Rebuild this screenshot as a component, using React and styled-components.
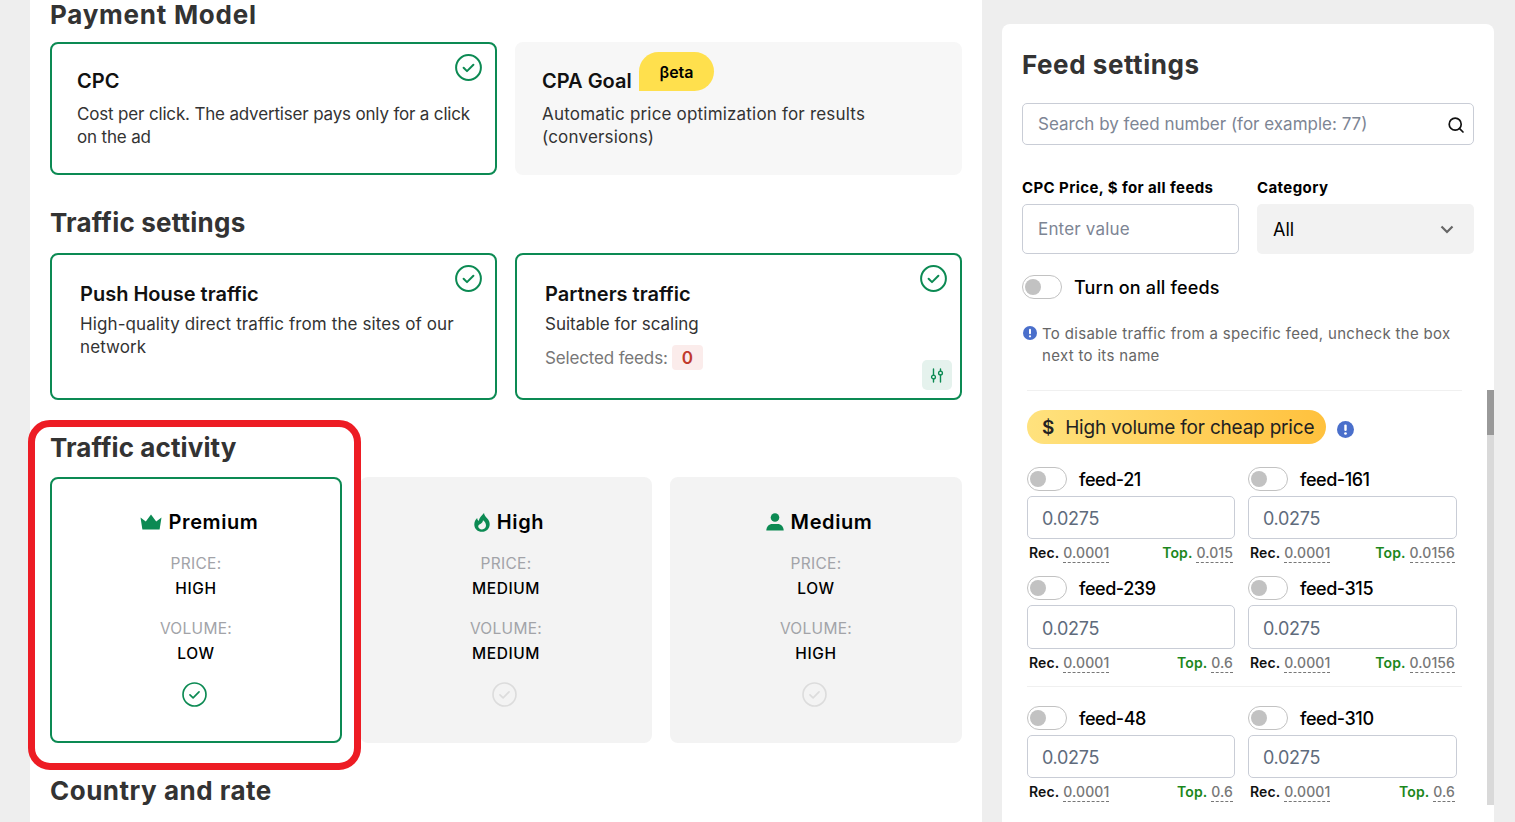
import React from "react";
import styled, { createGlobalStyle } from "styled-components";

const GREEN = "#0c8a53";

const GlobalStyle = createGlobalStyle`
  html, body {
    margin: 0;
    height: 100%;
    overflow: hidden;
    background: #eeeeee;
    font-family: Inter, "Liberation Sans", sans-serif;
    color: #000;
  }
  * { box-sizing: border-box; }
`;

const Page = styled.div`
  display: flex;
  align-items: flex-start;
  gap: 20px;
  height: 822px;
  padding-left: 30px;
  overflow: hidden;
`;

const MainPanel = styled.main`
  width: 952px;
  height: 822px;
  padding: 1px 20px 0;
  background: #fff;
`;

const Section = styled.section`
  position: relative;
  margin-bottom: 34px;
`;

const Heading = styled.h2`
  margin: 0 0 ${(p) => p.$after}px;
  font-size: 26px;
  line-height: 28px;
  font-weight: 700;
  letter-spacing: ${(p) => p.$track}px;
  color: #333;
`;

const Grid = styled.div`
  display: grid;
  grid-template-columns: repeat(${(p) => p.$cols}, 1fr);
  gap: 18px;
`;

const OptionCard = styled.div`
  position: relative;
  height: ${(p) => p.$height}px;
  padding: ${(p) => p.$pad};
  border-radius: 8px;
  border: 2px solid ${(p) => (p.$active ? GREEN : "#f7f7f7")};
  background: ${(p) => (p.$active ? "#fff" : "#f7f7f7")};
`;

const CardTitle = styled.div`
  display: flex;
  align-items: center;
  height: 26px;
  font-size: 20px;
  font-weight: 600;
  color: #111;
`;

const CardText = styled.p`
  margin: ${(p) => p.$top || 0}px 0 0;
  font-size: 17px;
  line-height: 23px;
  letter-spacing: ${(p) => p.$track ?? 0.1}px;
  color: #333;
`;

const CheckSlot = styled.span`
  position: absolute;
  top: 10px;
  right: 13px;
  display: flex;
`;

const BetaBadge = styled.span`
  position: absolute;
  top: 8px;
  left: 122px;
  display: flex;
  align-items: center;
  justify-content: center;
  width: 75px;
  height: 39px;
  border-radius: 20px 20px 20px 0;
  background: #ffe04d;
  font-size: 16px;
  font-weight: 600;
`;

const SelectedRow = styled.div`
  display: flex;
  align-items: center;
  gap: 4px;
  margin-top: 9px;
  font-size: 17px;
  letter-spacing: -0.15px;
  color: #777;
`;

const CountBadge = styled.span`
  display: flex;
  align-items: center;
  justify-content: center;
  width: 31px;
  height: 25px;
  border-radius: 4px;
  background: #fbeceb;
  color: #c0392b;
  font-weight: 600;
`;

const SliderButton = styled.span`
  position: absolute;
  right: 8px;
  bottom: 8px;
  display: flex;
  align-items: center;
  justify-content: center;
  width: 30px;
  height: 30px;
  border-radius: 5px;
  background: #e5f2ed;
`;

const ActivityCard = styled.div`
  display: flex;
  flex-direction: column;
  align-items: center;
  height: 266px;
  padding-top: 30px;
  border-radius: 8px;
  border: 2px solid ${(p) => (p.$active ? GREEN : "#f3f3f3")};
  background: ${(p) => (p.$active ? "#fff" : "#f3f3f3")};
`;

const ActivityTitle = styled.div`
  display: flex;
  align-items: center;
  gap: 7px;
  height: 26px;
  margin: 0 0 16px 6px;
  font-size: 20px;
  font-weight: 600;
  letter-spacing: 0.6px;
`;

const ActivityLabel = styled.div`
  font-size: 15.5px;
  line-height: 25px;
  letter-spacing: 0.3px;
  color: #a2a3a8;
`;

const ActivityValue = styled.div`
  margin-bottom: 15px;
  font-size: 15.5px;
  line-height: 25px;
  font-weight: 500;
  letter-spacing: 0.6px;
`;

const ActivityCheck = styled.span`
  display: flex;
  margin: 1px 3px 0 0;
`;

const Highlight = styled.div`
  position: absolute;
  top: -14px;
  left: -22px;
  width: 333px;
  height: 350px;
  border: 7px solid #ed1c24;
  border-radius: 22px;
  pointer-events: none;
`;

const SidePanel = styled.aside`
  position: relative;
  width: 492px;
  height: 798px;
  margin-top: 24px;
  padding: 25px 20px 0;
  border-radius: 8px 8px 0 0;
  background: #fff;
`;

const SideTitle = styled.h2`
  margin: 0 0 22px;
  height: 32px;
  font-size: 26px;
  line-height: 32px;
  font-weight: 700;
  letter-spacing: 0.55px;
  color: #333;
`;

const FieldBox = styled.div`
  position: relative;
  display: flex;
  align-items: center;
  height: ${(p) => p.$height}px;
  padding: ${(p) => (p.$value ? "2px 0 0 14px" : "0 0 0 15px")};
  border: 1px solid #c9cdd6;
  border-radius: 5px;
  background: #fff;
  font-size: ${(p) => (p.$value ? 18 : 17)}px;
  letter-spacing: ${(p) => p.$track || 0}px;
  color: ${(p) => (p.$value ? "#5f6b7c" : "#7d8594")};
`;

const SearchIcon = styled.span`
  position: absolute;
  right: 7px;
  top: 11px;
  display: flex;
`;

const FilterRow = styled.div`
  display: grid;
  grid-template-columns: 217px 217px;
  gap: 18px;
  margin-top: 33px;
`;

const FieldLabel = styled.div`
  height: 18px;
  margin-bottom: 8px;
  padding-top: 1px;
  font-size: 15px;
  line-height: 18px;
  font-weight: 700;
  letter-spacing: 0.4px;
`;

const SelectBox = styled.div`
  display: flex;
  align-items: center;
  justify-content: space-between;
  height: 50px;
  padding: 0 20px 0 16px;
  border-radius: 5px;
  background: #f2f2f2;
  font-size: 18px;
`;

const ToggleRow = styled.div`
  display: flex;
  align-items: center;
  gap: 12px;
  height: 24px;
  margin-top: ${(p) => p.$top || 0}px;
  font-size: 18px;
  font-weight: 500;
  letter-spacing: ${(p) => p.$track || 0.15}px;
`;

const Toggle = styled.span`
  display: block;
  flex: none;
  width: 40px;
  height: 24px;
  padding: 3px 2px;
  border: 1px solid #c2c2c2;
  border-radius: 12px;
  background: #fff;

  &::before {
    content: "";
    display: block;
    width: 16px;
    height: 16px;
    border-radius: 50%;
    background: #c2c2c2;
  }
`;

const Hint = styled.div`
  display: flex;
  align-items: flex-start;
  gap: 5px;
  margin-top: 24px;
  padding-left: 1px;
  font-size: 15px;
  line-height: 22px;
  letter-spacing: 0.32px;
  color: #666;

  svg {
    flex: none;
    margin-top: 3px;
  }
`;

const Divider = styled.hr`
  height: 1px;
  margin: ${(p) => p.$top}px 12px ${(p) => p.$bottom}px 5px;
  border: 0;
  background: #f0f0f0;
`;

const Tier = styled.div`
  display: flex;
  align-items: center;
  gap: 11px;
  margin-left: 5px;
  margin-bottom: 23px;
`;

const TierPill = styled.div`
  display: flex;
  align-items: center;
  gap: 11px;
  width: 299px;
  height: 34px;
  padding-left: 15px;
  border-radius: 17px;
  background: linear-gradient(90deg, #ffe27e, #ffc13d);
  font-size: 19px;
  letter-spacing: -0.2px;
  color: #222;

  b {
    font-weight: 600;
  }
`;

const TierIcon = styled.span`
  display: flex;
  margin-top: 4px;
`;

const FeedGrid = styled.div`
  display: grid;
  grid-template-columns: 208px 209px;
  column-gap: 13px;
  row-gap: 14px;
  margin-left: 5px;
`;

const Feed = styled.div`
  display: flex;
  flex-direction: column;
  gap: 5px;
`;

const Stats = styled.div`
  display: flex;
  justify-content: space-between;
  padding: 0 2px;
  font-size: 14px;
  line-height: 18px;
  letter-spacing: 0.1px;
`;

const Stat = styled.span`
  font-weight: 600;
  color: ${(p) => (p.$top ? "#1c871c" : "#111")};

  u {
    margin-left: 4px;
    padding-bottom: 1px;
    font-weight: 500;
    text-decoration: none;
    color: #777;
    border-bottom: 1px dashed #777;
  }
`;

const ScrollTrack = styled.div`
  position: absolute;
  top: 366px;
  right: 0;
  width: 7px;
  height: 415px;
  background: #d9d9d9;

  &::before {
    content: "";
    display: block;
    height: 45px;
    background: #999;
  }
`;

const CheckCircle = ({ size = 27, color = GREEN, width = 2 }) => (
  <svg width={size} height={size} viewBox="0 0 27 27" fill="none">
    <circle cx="13.5" cy="13.5" r="12.4" stroke={color} strokeWidth={width} />
    <path d="M8.6 13.8l3.4 3.3 6.4-6.4" stroke={color} strokeWidth={width} strokeLinecap="round" strokeLinejoin="round" />
  </svg>
);

const Crown = () => (
  <svg width="22" height="16" viewBox="0 0 22 16">
    <path fill={GREEN} d="M0.5 3.5L5.8 7.6 11 0.5l5.2 7.1 5.3-4.1-1.9 12H2.4z" />
  </svg>
);

const Flame = () => (
  <svg width="16" height="19" viewBox="0 0 16 19">
    <path
      fill={GREEN}
      fillRule="evenodd"
      d="M10 0c.4 2.700 1.700 3.700 3.300 5.400C14.900 7 15.700 9 15.700 11.200c0 4.300-3.300 7.600-7.700 7.600-4.300 0-7.700-3.200-7.700-7.400 0-2.500 1.200-4.800 2.900-6.300.1 1.300.5 2.200 1.400 2.900C5.400 5 7.500 2.500 10 0zM9 7.300C8.800 9.300 8 10 6.300 11 5 11.800 4.200 12.400 4.200 13.300c0 1.900 1.700 3.100 3.800 3.100 2.300 0 4-1.600 4-3.900 0-2-1.200-4-3-5.200z"
    />
  </svg>
);

const Person = () => (
  <svg width="18" height="18" viewBox="0 0 18 18">
    <circle cx="9" cy="4.500" r="4.300" fill={GREEN} />
    <path fill={GREEN} d="M0.300 17.500c0-4 2.800-6.600 6-6.600h5.400c3.200 0 6 2.600 6 6.600z" />
  </svg>
);

const Sliders = () => (
  <svg width="14" height="15" viewBox="0 0 14 15" fill="none" stroke={GREEN} strokeWidth="1.400" strokeLinecap="round">
    <path d="M3.500 1v6M3.500 11v3M10.500 1v2M10.500 7v7" />
    <circle cx="3.500" cy="9" r="1.900" />
    <circle cx="10.500" cy="5" r="1.900" />
  </svg>
);

const Magnifier = () => (
  <svg width="20" height="20" viewBox="0 0 20 20" fill="none" stroke="#111" strokeWidth="1.700" strokeLinecap="round">
    <circle cx="9.200" cy="9.200" r="6" />
    <path d="M13.600 13.600l3.400 3.400" />
  </svg>
);

const Chevron = () => (
  <svg width="14" height="9" viewBox="0 0 14 9" fill="none" stroke="#666" strokeWidth="2.200">
    <path d="M1.500 1.500L7 7l5.500-5.500" />
  </svg>
);

const InfoDot = ({ size = 14 }) => (
  <svg width={size} height={size} viewBox="0 0 14 14">
    <circle cx="7" cy="7" r="7" fill="#4a6fcb" />
    <rect x="6" y="2.800" width="2" height="5.400" rx="1" fill="#fff" />
    <circle cx="7" cy="10.300" r="1.100" fill="#fff" />
  </svg>
);

const activity = [
  { title: "Premium", icon: <Crown />, price: "HIGH", volume: "LOW", active: true },
  { title: "High", icon: <Flame />, price: "MEDIUM", volume: "MEDIUM" },
  { title: "Medium", icon: <Person />, price: "LOW", volume: "HIGH" },
];

const feedsTop = [
  { name: "feed-21", top: "0.015", height: 43 },
  { name: "feed-161", top: "0.0156", height: 43 },
  { name: "feed-239", top: "0.6", height: 44 },
  { name: "feed-315", top: "0.0156", height: 44 },
];

const feedsBottom = [
  { name: "feed-48", top: "0.6", height: 43 },
  { name: "feed-310", top: "0.6", height: 43 },
];

const FeedItem = ({ name, top, height }) => (
  <Feed>
    <ToggleRow $track={-0.45}>
      <Toggle />
      {name}
    </ToggleRow>
    <FieldBox $height={height} $value $track={-0.3}>0.0275</FieldBox>
    <Stats>
      <Stat>Rec.<u>0.0001</u></Stat>
      <Stat $top>Top.<u>{top}</u></Stat>
    </Stats>
  </Feed>
);

export default function App() {
  return (
    <>
      <GlobalStyle />
      <Page>
        <MainPanel>
          <Section>
            <Heading $after={13} $track={0.75}>Payment Model</Heading>
            <Grid $cols={2}>
              <OptionCard $active $height={133} $pad="24px 20px 0 25px">
                <CheckSlot><CheckCircle /></CheckSlot>
                <CardTitle>CPC</CardTitle>
                <CardText $top={9} $track={-0.17}>Cost per click. The advertiser pays only for a click on the ad</CardText>
              </OptionCard>
              <OptionCard $height={133} $pad="24px 60px 0 25px">
                <CardTitle>CPA Goal</CardTitle>
                <BetaBadge>βeta</BetaBadge>
                <CardText $top={9} $track={0.19}>Automatic price optimization for results (conversions)</CardText>
              </OptionCard>
            </Grid>
          </Section>

          <Section>
            <Heading $after={16} $track={0.22}>Traffic settings</Heading>
            <Grid $cols={2}>
              <OptionCard $active $height={147} $pad="26px 20px 0 28px">
                <CheckSlot><CheckCircle /></CheckSlot>
                <CardTitle>Push House traffic</CardTitle>
                <CardText $top={6}>High-quality direct traffic from the sites of our network</CardText>
              </OptionCard>
              <OptionCard $active $height={147} $pad="26px 20px 0 28px">
                <CheckSlot><CheckCircle /></CheckSlot>
                <CardTitle>Partners traffic</CardTitle>
                <CardText $top={6} $track={0}>Suitable for scaling</CardText>
                <SelectedRow>
                  Selected feeds:
                  <CountBadge>0</CountBadge>
                </SelectedRow>
                <SliderButton><Sliders /></SliderButton>
              </OptionCard>
            </Grid>
          </Section>

          <Section>
            <Highlight />
            <Heading $after={15} $track={0.1}>Traffic activity</Heading>
            <Grid $cols={3}>
              {activity.map((item) => (
                <ActivityCard key={item.title} $active={item.active}>
                  <ActivityTitle>
                    {item.icon}
                    {item.title}
                  </ActivityTitle>
                  <ActivityLabel>PRICE:</ActivityLabel>
                  <ActivityValue>{item.price}</ActivityValue>
                  <ActivityLabel>VOLUME:</ActivityLabel>
                  <ActivityValue>{item.volume}</ActivityValue>
                  <ActivityCheck>
                    {item.active
                      ? <CheckCircle size={25} width={1.800} />
                      : <CheckCircle size={25} color="#dcdcdc" width={1.800} />}
                  </ActivityCheck>
                </ActivityCard>
              ))}
            </Grid>
          </Section>

          <Heading $after={0} $track={0.5}>Country and rate</Heading>
        </MainPanel>

        <SidePanel>
          <SideTitle>Feed settings</SideTitle>
          <FieldBox $height={42}>
            Search by feed number (for example: 77)
            <SearchIcon><Magnifier /></SearchIcon>
          </FieldBox>

          <FilterRow>
            <div>
              <FieldLabel>CPC Price, $ for all feeds</FieldLabel>
              <FieldBox $height={50} $track={0.18}>Enter value</FieldBox>
            </div>
            <div>
              <FieldLabel>Category</FieldLabel>
              <SelectBox>
                All
                <Chevron />
              </SelectBox>
            </div>
          </FilterRow>

          <ToggleRow $top={21}>
            <Toggle />
            Turn on all feeds
          </ToggleRow>

          <Hint>
            <InfoDot />
            <span>To disable traffic from a specific feed, uncheck the box next to its name</span>
          </Hint>

          <Divider $top={23} $bottom={19} />

          <Tier>
            <TierPill>
              <b>$</b>
              High volume for cheap price
            </TierPill>
            <TierIcon><InfoDot size={17} /></TierIcon>
          </Tier>

          <FeedGrid>
            {feedsTop.map((feed) => <FeedItem key={feed.name} {...feed} />)}
          </FeedGrid>

          <Divider $top={14} $bottom={19} />

          <FeedGrid>
            {feedsBottom.map((feed) => <FeedItem key={feed.name} {...feed} />)}
          </FeedGrid>

          <ScrollTrack />
        </SidePanel>
      </Page>
    </>
  );
}
